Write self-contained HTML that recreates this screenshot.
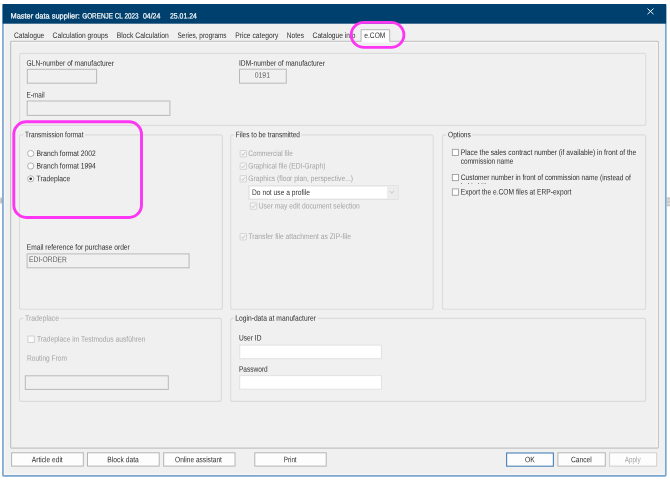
<!DOCTYPE html>
<html><head><meta charset="utf-8"><title>Master data supplier</title>
<style>
html,body{margin:0;padding:0;background:#fff;}
body{width:670px;height:481px;overflow:hidden;position:relative;font-family:"Liberation Sans",sans-serif;}
#shapes{position:absolute;left:0;top:0;}
.t{position:absolute;left:0;top:0;white-space:pre;font-size:8px;line-height:10px;height:10px;transform-origin:0 0;}
.tt{font-size:7.7px;-webkit-text-stroke:0.2px #fff;}
</style></head><body>
<svg id="shapes" width="670" height="481" viewBox="0 0 670 481">
 <!-- background artifacts -->
 <rect x="0" y="197.4" width="2.4" height="6.3" fill="#d0d0d0"/>
 <rect x="1.2" y="199" width="1.2" height="3.6" fill="#b0a89c"/>
 <rect x="666" y="197.3" width="4" height="9" fill="#cbcbcb"/>
 <rect x="667" y="199.5" width="3" height="1" fill="#e4e4e4"/>
 <rect x="667" y="203" width="3" height="1" fill="#e4e4e4"/>
 <!-- window -->
 <rect x="2.1" y="4" width="664.5" height="472.8" rx="1" fill="#f0f0f0"/>
 <rect x="4.4" y="20" width="660.2" height="454.2" fill="none" stroke="#f9f9f9" stroke-width="1.1"/>
 <rect x="2.95" y="4.8" width="662.8" height="471.1" rx="0.8" fill="none" stroke="#7ba7d0" stroke-width="1.7"/>
 <rect x="2.7" y="4" width="663.4" height="19.7" fill="#00406e"/>
 <!-- close -->
 <path d="M647.5 8.6 L653.5 14.2 M653.5 8.6 L647.5 14.2" stroke="#fff" stroke-width="0.95" fill="none"/>
 <!-- tab panel -->
 <rect x="10.65" y="41.3" width="647.65" height="406.8" rx="0.8" fill="#f0f0f0" stroke="#c2c2c2" stroke-width="1.2"/>
 <path d="M11.8 42.4 H657.1 V447" fill="none" stroke="#f8f8f8" stroke-width="1"/>
 <!-- active tab -->
 <path d="M361.1 41.8 V29.7 H389.7 V41.8" fill="#fff" stroke="#b4b4b4" stroke-width="1"/>
 <rect x="361.7" y="40.5" width="27.5" height="1.8" fill="#fff"/>
 <!-- group boxes -->
 <g fill="none" stroke="#dcdcdc" stroke-width="1.15">
  <rect x="19.6" y="53.4" width="626.2" height="71.9" rx="2"/>
  <rect x="19.5" y="134.8" width="202.9" height="174.4" rx="2"/>
  <rect x="230.7" y="134.8" width="202.5" height="174.4" rx="2"/>
  <rect x="442.5" y="134.8" width="203.1" height="174.4" rx="2"/>
  <rect x="19.5" y="318.4" width="201.9" height="82.9" rx="2"/>
  <rect x="230.7" y="318.4" width="414.9" height="82.9" rx="2"/>
 </g>
 <!-- label backgrounds -->
 <g fill="#f0f0f0">
  <rect x="23.5" y="130" width="61.5" height="9"/>
  <rect x="234.2" y="130" width="67.3" height="9"/>
  <rect x="446.5" y="130" width="25.8" height="9"/>
  <rect x="23.5" y="314" width="37" height="9"/>
  <rect x="233.7" y="314" width="83.7" height="9"/>
 </g>
 <!-- disabled inputs -->
 <g fill="#f0f0f0" stroke="#b9b9b9" stroke-width="1">
  <rect x="27.3" y="69.3" width="69.3" height="13.9"/>
  <rect x="239.5" y="69.2" width="46.8" height="14"/>
  <rect x="27.2" y="101" width="142.7" height="14.4"/>
  <rect x="27.1" y="253.9" width="162" height="13.9"/>
  <rect x="25.3" y="375.8" width="143" height="13.6"/>
 </g>
 <!-- enabled inputs -->
 <g fill="#fff" stroke="#e2e2e2" stroke-width="1">
  <rect x="239.7" y="345.1" width="141.7" height="13.6"/>
  <rect x="239.7" y="375.6" width="141.7" height="13.6"/>
 </g>
 <!-- dropdown -->
 <rect x="249" y="185.9" width="149" height="13.3" fill="#fff" stroke="#d9d9d9" stroke-width="1"/>
 <rect x="387" y="186.4" width="10.7" height="12.4" fill="#ececec"/>
 <path d="M389.6 191 L391.7 193.1 L393.8 191" fill="none" stroke="#b8b8b8" stroke-width="0.8"/>
 <!-- radios -->
 <g fill="#fff" stroke="#8c8c8c" stroke-width="0.65">
  <circle cx="30.7" cy="153.5" r="3.1"/>
  <circle cx="30.7" cy="166" r="3.1"/>
  <circle cx="30.7" cy="178.8" r="3.1"/>
 </g>
 <circle cx="30.7" cy="178.8" r="1.35" fill="#2a2a2a"/>
 <!-- disabled checked checkboxes -->
 <g fill="#f5f5f5" stroke="#cdcdcd" stroke-width="0.8">
  <rect x="240.1" y="150.5" width="6.4" height="6.4" rx="0.4"/>
  <rect x="240.1" y="163.0" width="6.4" height="6.4" rx="0.4"/>
  <rect x="240.1" y="175.6" width="6.4" height="6.4" rx="0.4"/>
  <rect x="250.3" y="202.9" width="6.4" height="6.4" rx="0.4"/>
  <rect x="240.1" y="233.5" width="6.4" height="6.4" rx="0.4"/>
 </g>
 <g fill="none" stroke="#bcbcbc" stroke-width="0.9">
  <path d="M241.4 153.8 L242.8 155.3 L245.4 152.1"/>
  <path d="M241.4 166.3 L242.8 167.8 L245.4 164.6"/>
  <path d="M241.4 178.9 L242.8 180.4 L245.4 177.2"/>
  <path d="M251.6 206.2 L253.0 207.7 L255.6 204.5"/>
  <path d="M241.4 236.8 L242.8 238.3 L245.4 235.1"/>
 </g>
 <!-- options checkboxes -->
 <g fill="#fff" stroke="#8c8c8c" stroke-width="0.75">
  <rect x="452.3" y="149.3" width="6.3" height="6.3"/>
  <rect x="452.3" y="174.4" width="6.3" height="6.3"/>
  <rect x="452.3" y="188.9" width="6.3" height="6.3"/>
 </g>
 <!-- tradeplace checkbox disabled -->
 <rect x="27.9" y="336" width="6.4" height="6.4" fill="#fafafa" stroke="#c8c8c8" stroke-width="0.8"/>
 <!-- buttons -->
 <g fill="#fdfdfd" stroke="#b4b4b4" stroke-width="1">
  <rect x="11.6" y="452.8" width="71.7" height="13.3"/>
  <rect x="87.5" y="452.8" width="71.7" height="13.3"/>
  <rect x="163.7" y="452.8" width="71.3" height="13.3"/>
  <rect x="254.8" y="452.8" width="71.4" height="13.3"/>
  <rect x="557.9" y="452.8" width="47.4" height="13.3"/>
  <rect x="609.6" y="452.8" width="47.1" height="13.3" stroke="#cfcfcf"/>
 </g>
 <rect x="506.6" y="453" width="46.8" height="13.2" fill="#fdfdfd" stroke="#5086bc" stroke-width="1.15"/>
</svg>
<div id="txt" style="position:absolute;left:0;top:0;width:670px;height:481px;will-change:transform">
<span class='t tt' style='color:#fff;transform:matrix(0.9638,0.0008,0.0005,1,10.50,11.40)'>Master data supplier:</span>
<span class='t tt' style='color:#fff;transform:matrix(0.8285,0.0008,0.0005,1,82.20,11.40)'>GORENJE CL 2023</span>
<span class='t tt' style='color:#fff;transform:matrix(0.9091,0.0008,0.0005,1,142.90,11.40)'>04/24</span>
<span class='t tt' style='color:#fff;transform:matrix(0.8952,0.0008,0.0005,1,170.00,11.40)'>25.01.24</span>
<span class='t' style='color:#2e2e2e;transform:matrix(0.8332,0.0008,0.0005,1,13.90,30.90)'>Catalogue</span>
<span class='t' style='color:#2e2e2e;transform:matrix(0.8360,0.0008,0.0005,1,52.60,30.90)'>Calculation groups</span>
<span class='t' style='color:#2e2e2e;transform:matrix(0.8473,0.0008,0.0005,1,116.80,30.90)'>Block Calculation</span>
<span class='t' style='color:#2e2e2e;transform:matrix(0.8060,0.0008,0.0005,1,177.50,30.90)'>Series, programs</span>
<span class='t' style='color:#2e2e2e;transform:matrix(0.8428,0.0008,0.0005,1,235.20,30.90)'>Price category</span>
<span class='t' style='color:#2e2e2e;transform:matrix(0.8227,0.0008,0.0005,1,286.80,30.90)'>Notes</span>
<span class='t' style='color:#2e2e2e;transform:matrix(0.8315,0.0008,0.0005,1,312.60,30.90)'>Catalogue info</span>
<span class='t' style='color:#2e2e2e;transform:matrix(0.8326,0.0008,0.0005,1,364.30,30.90)'>e.COM</span>
<span class='t' style='color:#2e2e2e;transform:matrix(0.8364,0.0008,0.0005,1,26.60,58.80)'>GLN-number of manufacturer</span>
<span class='t' style='color:#2e2e2e;transform:matrix(0.8364,0.0008,0.0005,1,239.00,58.80)'>IDM-number of manufacturer</span>
<span class='t' style='color:#606060;transform:matrix(0.8597,0.0008,0.0005,1,254.70,70.70)'>0191</span>
<span class='t' style='color:#2e2e2e;transform:matrix(0.7939,0.0008,0.0005,1,26.60,90.60)'>E-mail</span>
<span class='t' style='color:#2e2e2e;transform:matrix(0.8106,0.0008,0.0005,1,25.00,130.20)'>Transmission format</span>
<span class='t' style='color:#2e2e2e;transform:matrix(0.8170,0.0008,0.0005,1,235.70,130.20)'>Files to be transmitted</span>
<span class='t' style='color:#2e2e2e;transform:matrix(0.8267,0.0008,0.0005,1,448.00,130.20)'>Options</span>
<span class='t' style='color:#2e2e2e;transform:matrix(0.8411,0.0008,0.0005,1,36.60,148.90)'>Branch format 2002</span>
<span class='t' style='color:#2e2e2e;transform:matrix(0.8411,0.0008,0.0005,1,36.60,161.40)'>Branch format 1994</span>
<span class='t' style='color:#2e2e2e;transform:matrix(0.8456,0.0008,0.0005,1,36.60,174.20)'>Tradeplace</span>
<span class='t' style='color:#a4a4a4;transform:matrix(0.8091,0.0008,0.0005,1,248.20,148.90)'>Commercial file</span>
<span class='t' style='color:#a4a4a4;transform:matrix(0.8347,0.0008,0.0005,1,248.20,161.40)'>Graphical file (EDI-Graph)</span>
<span class='t' style='color:#a4a4a4;transform:matrix(0.8418,0.0008,0.0005,1,248.20,174.00)'>Graphics (floor plan, perspective...)</span>
<span class='t' style='color:#333;transform:matrix(0.8360,0.0008,0.0005,1,252.00,187.90)'>Do not use a profile</span>
<span class='t' style='color:#a4a4a4;transform:matrix(0.8390,0.0008,0.0005,1,258.70,201.40)'>User may edit document selection</span>
<span class='t' style='color:#a4a4a4;transform:matrix(0.8404,0.0008,0.0005,1,248.50,231.90)'>Transfer file attachment as ZIP-file</span>
<span class='t' style='color:#2e2e2e;transform:matrix(0.8415,0.0008,0.0005,1,460.80,147.90)'>Place the sales contract number (if available) in front of the</span>
<span class='t' style='color:#2e2e2e;transform:matrix(0.8143,0.0008,0.0005,1,460.80,156.70)'>commission name</span>
<span class='t' style='color:#2e2e2e;transform:matrix(0.8257,0.0008,0.0005,1,460.80,173.00)'>Customer number in front of commission name (instead of</span>
<span class='t' style='color:#2e2e2e;transform:matrix(0.8320,0.0008,0.0005,1,460.80,187.50)'>Export the e.COM files at ERP-export</span>
<span class='t' style='color:#2e2e2e;transform:matrix(0.8332,0.0008,0.0005,1,26.80,242.70)'>Email reference for purchase order</span>
<span class='t' style='color:#606060;transform:matrix(0.8465,0.0008,0.0005,1,29.00,255.10)'>EDI-ORDER</span>
<span class='t' style='color:#a4a4a4;transform:matrix(0.8557,0.0008,0.0005,1,25.00,313.80)'>Tradeplace</span>
<span class='t' style='color:#a4a4a4;transform:matrix(0.8405,0.0008,0.0005,1,37.00,334.60)'>Tradeplace im Testmodus ausführen</span>
<span class='t' style='color:#a4a4a4;transform:matrix(0.8253,0.0008,0.0005,1,27.00,353.80)'>Routing From</span>
<span class='t' style='color:#2e2e2e;transform:matrix(0.8401,0.0008,0.0005,1,235.20,313.80)'>Login-data at manufacturer</span>
<span class='t' style='color:#2e2e2e;transform:matrix(0.8295,0.0008,0.0005,1,239.00,333.60)'>User ID</span>
<span class='t' style='color:#2e2e2e;transform:matrix(0.8171,0.0008,0.0005,1,239.00,364.70)'>Password</span>
<span class='t' style='color:#2e2e2e;transform:matrix(0.8271,0.0008,0.0005,1,31.80,455.20)'>Article edit</span>
<span class='t' style='color:#2e2e2e;transform:matrix(0.8432,0.0008,0.0005,1,107.30,455.20)'>Block data</span>
<span class='t' style='color:#2e2e2e;transform:matrix(0.8239,0.0008,0.0005,1,175.00,455.20)'>Online assistant</span>
<span class='t' style='color:#2e2e2e;transform:matrix(0.7780,0.0008,0.0005,1,283.80,455.20)'>Print</span>
<span class='t' style='color:#2e2e2e;transform:matrix(0.8476,0.0008,0.0005,1,525.00,455.20)'>OK</span>
<span class='t' style='color:#2e2e2e;transform:matrix(0.8351,0.0008,0.0005,1,570.90,455.20)'>Cancel</span>
<span class='t' style='color:#a4a4a4;transform:matrix(0.7894,0.0008,0.0005,1,624.80,455.20)'>Apply</span>
<div style="position:absolute;left:455px;top:180px;width:100px;height:4.1px;overflow:hidden"><span class='t' style='color:#2e2e2e;transform:matrix(0.7806,0.0008,0.0005,1,5.80,1.80)'>behind it)</span></div>
</div>
<svg id="pink" width="670" height="481" viewBox="0 0 670 481" style="position:absolute;left:0;top:0">
 <g fill="none" stroke="#fd36f3">
  <rect x="351.2" y="22.4" width="52.7" height="25" rx="13" ry="12.3" stroke-width="2.9"/>
  <rect x="13.8" y="121.8" width="127.7" height="95.7" rx="12.5" ry="12.5" stroke-width="2.9"/>
 </g>
</svg>
</body></html>
